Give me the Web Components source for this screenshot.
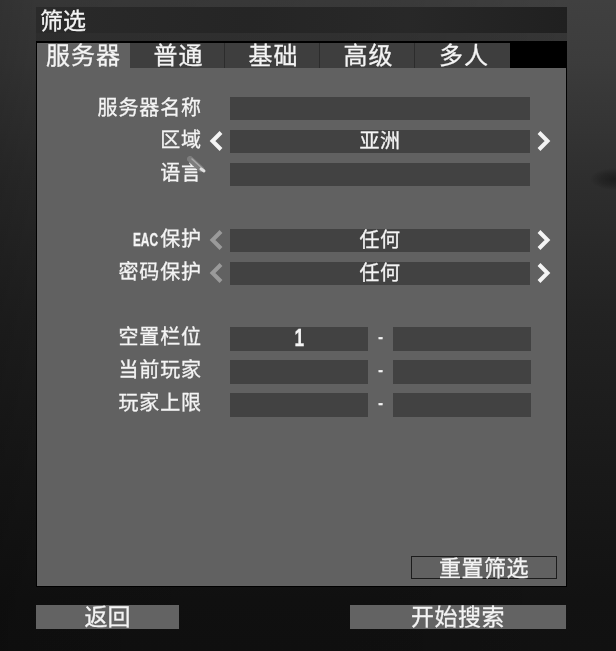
<!DOCTYPE html>
<html>
<head>
<meta charset="utf-8">
<style>
  html, body { margin: 0; height: 100%; background: #1c1c1c; }
  body { font-family: "Noto Sans CJK SC", "Noto Sans", sans-serif; color: #f4f4f4; overflow: hidden; }
</style>
</head>
<body>
<filter-screen>
  <span slot="title">筛选</span>
  <tab-bar slot="tabs">
    <tab-item active>服务器</tab-item>
    <tab-item>普通</tab-item>
    <tab-item>基础</tab-item>
    <tab-item>高级</tab-item>
    <tab-item>多人</tab-item>
  </tab-bar>

  <filter-row class="top" label="服务器名称"><text-box></text-box></filter-row>
  <filter-row label="区域"><option-box value="亚洲"></option-box></filter-row>
  <filter-row label="语言"><text-box></text-box><mouse-cursor></mouse-cursor></filter-row>
  <filter-row class="gap" label="EAC保护"><option-box value="任何" left-off></option-box></filter-row>
  <filter-row label="密码保护"><option-box value="任何" left-off></option-box></filter-row>
  <filter-row class="gap range first-range" label="空置栏位"><range-box min="1"></range-box></filter-row>
  <filter-row class="range" label="当前玩家"><range-box></range-box></filter-row>
  <filter-row class="range" label="玩家上限"><range-box></range-box></filter-row>

  <span slot="reset">重置筛选</span>
  <span slot="back">返回</span>
  <span slot="search">开始搜索</span>
</filter-screen>

<script>
function define(name, css, html, setup) {
  customElements.define(name, class extends HTMLElement {
    constructor() {
      super();
      this.attachShadow({ mode: 'open' });
      this.shadowRoot.innerHTML = '<style>' + css + '</style>' + html;
    }
    connectedCallback() {
      if (setup) setup(this, this.shadowRoot);
    }
  });
}

define('filter-screen', `
  * { box-sizing: border-box; }
  :host {
    box-sizing: border-box;
    display: flex;
    flex-direction: column;
    width: 616px;
    height: 651px;
    padding: 7px 49px 0 36px;
    filter: blur(.45px);
    -webkit-text-stroke: .3px currentColor;
    background:
      radial-gradient(ellipse 24px 11px at 614px 179px, rgba(8,8,8,.45), rgba(8,8,8,.25) 55%, rgba(8,8,8,0)),
      linear-gradient(90deg, rgba(0,0,0,.22) 0, rgba(0,0,0,.16) 36px, rgba(0,0,0,.1) 400px, rgba(0,0,0,0) 568px),
      linear-gradient(180deg, #404040 0, #3c3c3c 60px, #2e2e2e 180px, #222 320px, #191919 470px, #121212 600px, #111 651px);
  }
  .title {
    height: 34px;
    width: 531px;
    padding-left: 4px;
    background: linear-gradient(90deg, #2a2a2a, #252525 40%, #282828 70%, #202020) padding-box;
    border-bottom: 8px solid rgba(0,0,0,.12);
    font-size: 23px;
    line-height: 24px;
  }
  .window {
    width: 531px;
    height: 546px;
    border: 1px solid #000;
    border-top-width: 2px;
    background: #000;
    display: flex;
    flex-direction: column;
  }
  .panel {
    flex: 1;
    position: relative;
    background: #616161;
    padding-top: 29px;
    display: flex;
    flex-direction: column;
  }
  .reset {
    position: absolute;
    right: 9px;
    bottom: 7px;
    width: 146px;
    height: 23px;
    border: 1px solid #1c1c1c;
    font-size: 22px;
    line-height: 18px;
    letter-spacing: .5px;
    text-align: right;
    padding-right: 27px;
  }
  .buttons {
    margin-top: 18px;
    display: flex;
    justify-content: space-between;
    width: 530px;
  }
  .btn {
    height: 24px;
    background: #636363;
    font-size: 23px;
    line-height: 20px;
    text-align: center;
  }
  .back { width: 143px; }
  .search { width: 216px; letter-spacing: .5px; }
`, `
  <div class="title"><slot name="title"></slot></div>
  <div class="window">
    <slot name="tabs"></slot>
    <div class="panel">
      <slot></slot>
      <div class="reset"><slot name="reset"></slot></div>
    </div>
  </div>
  <div class="buttons">
    <div class="btn back"><slot name="back"></slot></div>
    <div class="btn search"><slot name="search"></slot></div>
  </div>
`);

define('tab-bar', `
  :host {
    display: flex;
    height: 25px;
    background: #000;
  }
`, `<slot></slot>`);

define('tab-item', `
  :host {
    display: block;
    width: 95px;
    height: 25px;
    padding-left: 3px;
    background: #3e3e3e;
    border-right: 1px solid #2c2c2c;
    box-sizing: border-box;
    font-size: 24px;
    line-height: 21px;
    text-align: center;
    letter-spacing: 1px;
  }
  :host([active]) { width: 93px; padding-left: 0; background: #616161; border-right: 0; }
  :host(:last-child) { border-right: 0; }
`, `<slot></slot>`);

define('filter-row', `
  :host {
    display: flex;
    height: 33px;
    position: relative;
  }
  :host(.gap) { margin-top: 33px; }
  :host(.first-range) { margin-top: 32px; }
  .label {
    width: 165px;
    font-size: 20px;
    line-height: 18px;
    letter-spacing: .9px;
    text-align: right;
  }
  :host(.top) .label { line-height: 20px; }
  .latin {
    display: inline-block;
    font-family: "Liberation Sans", sans-serif;
    font-weight: 700;
    font-size: 18px;
    letter-spacing: 0;
    transform: scaleX(.66);
    transform-origin: right center;
    margin-left: -13px;
    margin-right: 2px;
  }
  .body { margin-left: 28px; }
`, `
  <div class="label"></div>
  <div class="body"><slot></slot></div>
`, (el, root) => {
  root.querySelector('.label').innerHTML =
    el.getAttribute('label').replace(/[A-Z]+/, '<span class="latin">$&</span>');
});

define('text-box', `
  :host {
    display: block;
    width: 300px;
    height: 23px;
    background: #424242;
  }
`, ``);

define('option-box', `
  :host {
    display: block;
    position: relative;
    width: 300px;
    height: 23px;
    background: #424242;
    text-align: center;
    font-size: 20px;
    line-height: 20px;
    letter-spacing: .6px;
  }
  svg { position: absolute; top: 0; width: 16px; height: 22px; fill: none; stroke: #f4f4f4; stroke-width: 4; }
  .left { left: -22px; }
  .right { right: -22px; }
  .off { stroke: #9a9a9a; }
`, `
  <svg class="left" viewBox="0 0 16 22"><path d="M13 2.5 L4.5 11 L13 19.5"/></svg>
  <span class="value"></span>
  <svg class="right" viewBox="0 0 16 22"><path d="M3 2.5 L11.5 11 L3 19.5"/></svg>
`, (el, root) => {
  root.querySelector('.value').textContent = el.getAttribute('value');
  if (el.hasAttribute('left-off')) root.querySelector('.left').classList.add('off');
});

define('range-box', `
  :host {
    display: flex;
    width: 301px;
    height: 24px;
  }
  .box {
    width: 138px;
    background: #424242;
    text-align: center;
    font-family: "Liberation Sans", sans-serif;
    font-weight: 700;
    font-size: 23px;
    line-height: 23px;
  }
  .box span { display: inline-block; transform: scaleX(.75); }
  .dash {
    width: 25px;
    text-align: center;
    font-family: "Liberation Sans", sans-serif;
    font-size: 14px;
    line-height: 20px;
    font-weight: 700;
  }
`, `
  <div class="box"><span class="min"></span></div>
  <div class="dash">-</div>
  <div class="box"></div>
`, (el, root) => {
  root.querySelector('.min').textContent = el.getAttribute('min') || '';
});

define('mouse-cursor', `
  :host {
    position: absolute;
    left: 150px;
    top: -7px;
    width: 20px;
    height: 19px;
  }
  svg { display: block; }
`, `
  <svg width="20" height="19" viewBox="0 0 20 19" fill="none" stroke-linecap="round">
    <path d="M3 3 L14 13" stroke="#7d7d7d" stroke-width="6"/>
    <path d="M5 3 L17 14" stroke="#a8a8a8" stroke-width="1.5"/>
    <path d="M14 13 L17 15" stroke="#e0e0e0" stroke-width="3"/>
  </svg>
`);
</script>
</body>
</html>
